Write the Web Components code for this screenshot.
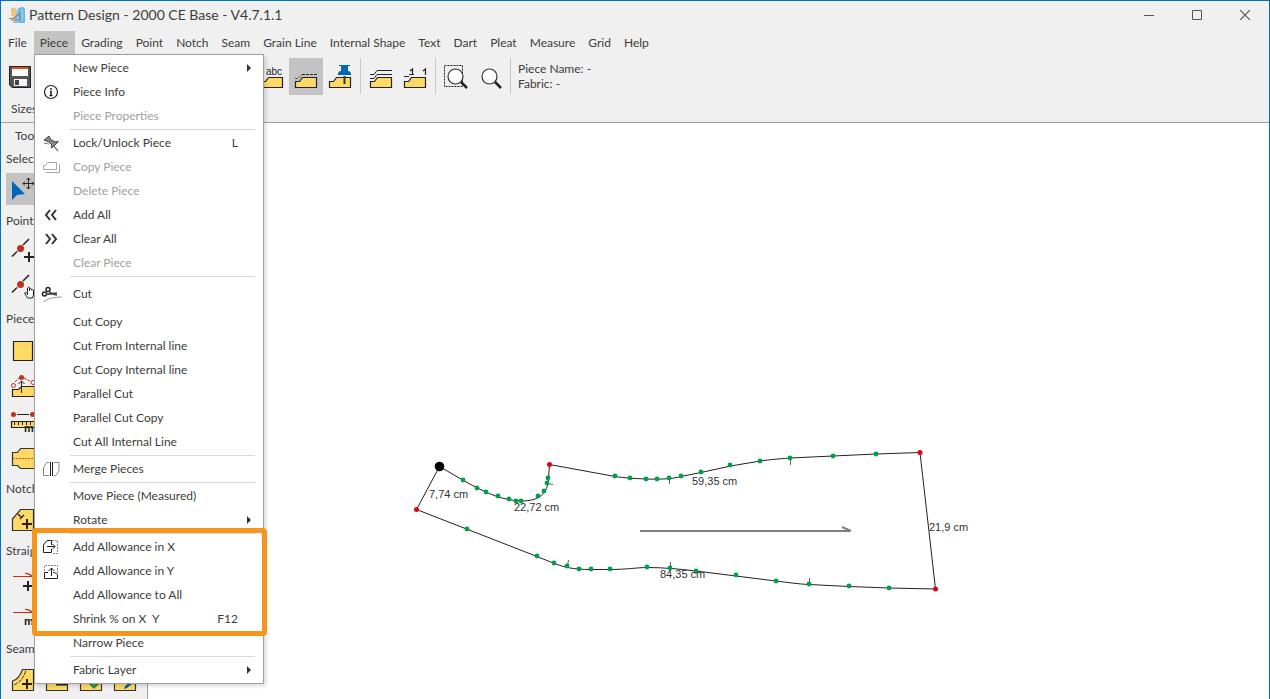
<!DOCTYPE html>
<html lang="en">
<head>
<meta charset="utf-8">
<title>Pattern Design - 2000 CE Base - V4.7.1.1</title>
<style>
  html, body { height: 100%; margin: 0; }
  body { font: 12px/16px Lato, "Open Sans", sans-serif; color: #3c3c3c; overflow: hidden; }
</style>
</head>
<body>
<pattern-app></pattern-app>

<script>
const TILE = 'M6.5 29.5V23.5H10.5L13.5 19.5H27.5V29.5Z';
const tile = `<path d="${TILE}" fill="#ffd966" stroke="#222" stroke-width="1.2"/>`;
const plus = (x, y) => `<path d="M${x - 5} ${y}h10M${x} ${y - 5}v10" stroke="#222" stroke-width="2" fill="none"/>`;
const lens = '<circle cx="16.5" cy="18.5" r="7.5" fill="#fff" stroke="#333" stroke-width="1.2"/><path d="M22 24l6 6" stroke="#222" stroke-width="2.5"/>';
const seamTile = '<path d="M6.5 28.5V19C11 18 14.5 13 16.5 7.5H27.5V28.5Z" fill="#ffd966" stroke="#333" stroke-width="1.2"/>';
const edgePoints = '<path d="M6 22.5l5-5M17 11l6-6" stroke="#222" stroke-width="1.5"/><circle cx="14.5" cy="14.5" r="3.5" fill="#c0311a"/>';
const grain = '<path d="M7 12.5h21M19 9.5q2-1 8 3" fill="none" stroke="#c0311a" stroke-width="1.2"/>';

/* name: [width, height, drawing] */
const ICONS = {
  app: [16, 16, '<path d="M8 2l5-2 3 2v14H4z" fill="#8cc4e8"/><path d="M11 1h4v14h-4z" fill="#8cccf0" stroke="#4f9fd0" stroke-width=".8"/><path d="M3 13L11 6v7z" fill="none" stroke="#7a8a94" stroke-width="1.2"/><path d="M2 2q3-3 5 0v6l-2 2v5H4v-5L2 8z" fill="#f1c27b"/><path d="M0 11.5h5" stroke="#888"/>'],
  minimize: [10, 10, '<path d="M0 5.5h10" stroke="#555"/>'],
  maximize: [10, 10, '<path d="M.5.5h9v9h-9z" fill="none" stroke="#555"/>'],
  close: [10, 10, '<path d="M0 0l10 10M10 0L0 10" stroke="#555" stroke-width="1.2"/>'],
  save: [34, 37, '<path d="M6 8h22v22H9l-3-3z" fill="#555"/><path d="M9 9h16v9H9z" fill="#fff"/><path d="M9 8h16v3H9z" fill="#d9541e"/><path d="M6.5 8.5h21v21H9.5l-3-3z" fill="none" stroke="#222"/><path d="M11 21h13v7H11z" fill="#f4f4f4"/><path d="M12 22h4v5h-4z" fill="#444"/>'],
  piece: [34, 37, tile],
  text: [34, 37, tile + '<text x="11" y="17" font-family="Liberation Sans" font-size="10" fill="#222">abc</text>'],
  seamline: [34, 37, tile + '<path d="M6 20.5h3l4-4" fill="none" stroke="#555" stroke-dasharray="3 1"/><path d="M13 16.5h15" stroke="#222" stroke-dasharray="3 1"/>'],
  pinned: [34, 37, tile + '<path d="M21.5 18v8" stroke="#333" stroke-width="2"/><path d="M16 7h11v1h-2v5h1l2 2v2H15v-2l2-2h1V8h-2z" fill="#0067b8"/>'],
  layers: [34, 37, tile + '<path d="M6 20.5h4l3-4h15M6 16.5h4l3-4h15" fill="none" stroke="#222"/>'],
  numbers: [34, 37, tile + '<path d="M6 18.5h5M11 16.5h5M12 13l2.5-2v6M25 13l2.5-2v6" fill="none" stroke="#222" stroke-width="1.2"/>'],
  zoomarea: [34, 37, '<path d="M5.5 7.5h18v21h-18z" fill="none" stroke="#222" stroke-dasharray="2 1"/>' + lens],
  zoom: [34, 37, lens],

  select: [34, 36, '<path d="M6 9v19l5-5 8-1z" fill="#0067b8"/><path d="M17 11.5h11M22.5 6v11M19 9.5l-2 2 2 2M26 9.5l2 2-2 2M20.5 8l2-2 2 2M20.5 15l2 2 2-2" fill="none" stroke="#222"/>'],
  pointadd: [34, 36, edgePoints + plus(23, 23)],
  pointmove: [34, 36, edgePoints + '<path d="M21.5 25v-7q1.5-2 2 0v3-2q1.5-1 2 0v1q1.5-1 2 0v5l-1 3h-5l-3-5q1-2 3 1" fill="#fff" stroke="#222"/>'],
  rect: [34, 36, '<path d="M7.5 9.5h19v19h-19z" fill="#ffd966" stroke="#222" stroke-width="1.2"/>'],
  reshape: [34, 36, '<path d="M6.5 28.5v-7h6l3-3h13v10z" fill="#ffd966" stroke="#222" stroke-width="1.2"/><path d="M9 14l4-4M18 10l6 3" stroke="#c0311a" stroke-dasharray="3 1"/><circle cx="7.5" cy="17.5" r="2" fill="#fff" stroke="#c0311a"/><circle cx="27" cy="14.5" r="2" fill="#fff" stroke="#c0311a"/><circle cx="15.5" cy="9.5" r="2.5" fill="#c0311a"/><path d="M15.5 25V13M12.5 16l3-3 3 3" fill="none" stroke="#222"/>'],
  ruler: [34, 36, '<circle cx="7.5" cy="10.5" r="2.5" fill="#c0311a"/><circle cx="26.5" cy="10.5" r="2.5" fill="#c0311a"/><path d="M11 10.5h12" stroke="#222"/><path d="M5.5 17.5h23v6h-23z" fill="#ffd966" stroke="#222" stroke-width="1.2"/><path d="M8.5 18v3M12.5 18v3M16.5 18v3M20.5 18v3M24.5 18v3" stroke="#222"/><text x="18" y="28" font-family="Liberation Sans" font-weight="700" font-size="11" fill="#222">m</text>'],
  mirror: [34, 36, '<path d="M6.5 12.5h5l3-4h14v20h-14l-3-3h-5z" fill="#ffd966" stroke="#333" stroke-width="1.2"/><path d="M7 18.5h21" stroke="#d9541e" stroke-dasharray="2 1"/>'],
  notch: [34, 36, '<path d="M6.5 28.5V17l8-9.5h13v21z" fill="#ffd966" stroke="#333" stroke-width="1.2"/><path d="M12 12l4 4M14 17l4-4" stroke="#222" stroke-width="1.2"/>' + plus(21, 22)],
  grainadd: [34, 36, grain + plus(22, 22)],
  grainmeasure: [34, 36, grain + '<text x="18" y="25" font-family="Liberation Sans" font-weight="700" font-size="11" fill="#222">m</text>'],
  seamadd: [34, 36, seamTile + '<path d="M8 23q9-4 12-15" fill="none" stroke="#333" stroke-dasharray="4 1"/>' + plus(21, 22)],
  seamremove: [34, 36, seamTile + '<path d="M16 22.5h11" stroke="#222" stroke-width="2"/>'],
  seamcheck: [34, 36, seamTile + '<path d="M16 21l4 4 4-4" fill="none" stroke="#23904a" stroke-width="3"/>'],
  seamedit: [34, 36, seamTile + '<path d="M16 27l1-3 5-4 2 2-5 4z" fill="#0067b8"/>'],

  info: [24, 24, '<circle cx="12" cy="12" r="6.5" fill="none" stroke="#222" stroke-width="1.2"/><path d="M12 8v2M11 11.5h1v4M10.5 15.5h3" fill="none" stroke="#222" stroke-width="1.5"/>'],
  pin: [24, 24, '<path d="M10 5l2 4 5 2 2-1v1l-6 6-1-1 1-2-3-3-5-2z" fill="#888" stroke="#444"/><path d="M5 12l5 1M14 14l5 6" stroke="#777" stroke-width="1.2"/>'],
  copy: [24, 24, '<path d="M4.5 14.5v-4h2l2-3h9v7zM7 17.5h13.5V9" fill="none" stroke="#a8a8a8"/>'],
  addall: [24, 24, '<path d="M11 7l-4 5 4 5M17 7l-4 5 4 5" fill="none" stroke="#333" stroke-width="2"/>'],
  clearall: [24, 24, '<path d="M7 7l4 5-4 5M13 7l4 5-4 5" fill="none" stroke="#333" stroke-width="2"/>'],
  cut: [24, 24, '<circle cx="9" cy="7.5" r="2" fill="none" stroke="#222" stroke-width="1.5"/><circle cx="5.5" cy="12" r="2" fill="none" stroke="#222" stroke-width="1.5"/><path d="M7 12l11-1M10 9l3 3 5 1" fill="none" stroke="#444" stroke-width="1.5"/><path d="M4 20q6-5 19-5" fill="none" stroke="#999"/>'],
  merge: [24, 24, '<path d="M10 5.5H7.5L4.5 11v7.5H10" fill="none" stroke="#888"/><path d="M11.5 5v14M13.5 5v14" stroke="#222"/><path d="M15 5.5h5V14l-3 4.5h-2" fill="none" stroke="#888"/>'],
  allowx: [24, 24, '<path d="M12.5 10V5.5H8L4.5 10v7.5h8V14" fill="none" stroke="#222"/><path d="M13 5.5h5.5v13H13" fill="none" stroke="#888" stroke-dasharray="2 1"/><path d="M8 11.5h8M13.5 9l2.5 2.5-2.5 2.5" fill="none" stroke="#222"/>'],
  allowy: [24, 24, '<path d="M5.5 12V6.5h13V14" fill="none" stroke="#888" stroke-dasharray="2 1"/><path d="M9 13.5H5.5v6h13v-4l-3-2H14" fill="none" stroke="#222"/><path d="M12.5 17V9M9.5 12l3-3 3 3" fill="none" stroke="#222"/>'],
  arrow: [4, 8, '<path d="M0 0l4 4-4 4z" fill="#333"/>']
};

function define(name, html, setup) {
  const template = document.createElement('template');
  template.innerHTML = html;
  customElements.define(name, class extends HTMLElement {
    connectedCallback() {
      if (this.shadowRoot) return;
      const root = this.attachShadow({ mode: 'open' });
      root.append(template.content.cloneNode(true));
      if (setup) setup(this, root);
    }
  });
}

define('ui-icon', '<style>:host{display:block;flex:none}svg{display:block}</style>', (el, root) => {
  const [w, h, art] = ICONS[el.getAttribute('name')];
  root.innerHTML += `<svg width="${w}" height="${h}" viewBox="0 0 ${w} ${h}" aria-hidden="true">${art}</svg>`;
});

define('tool-button', `
<style>
  :host { display: block; flex: none; }
  button { display: flex; align-items: center; justify-content: center; width: 100%; border: 0; padding: 0; background: none; }
  :host([active]) button { background: #c3c3c3; }
  :host([active="short"]) button { background: linear-gradient(#c3c3c3, #c3c3c3) 0 1px / 100% 32px no-repeat; }
  :host([window]) { width: 48px; }
  :host([window]) button { height: 28px; }
</style>
<button type="button"></button>`, (el, root) => {
  const name = el.getAttribute('icon');
  const button = root.querySelector('button');
  button.setAttribute('aria-label', name);
  button.innerHTML = `<ui-icon name="${name}"></ui-icon>`;
});

define('title-bar', `
<style>
  :host { display: flex; align-items: center; height: 28px; padding: 0 0 2px 8px; font-size: 14px; }
  h1 { flex: 1; margin: 0; padding-left: 4px; font: inherit; }
</style>
<ui-icon name="app"></ui-icon>
<h1><slot></slot></h1>
<tool-button window icon="minimize"></tool-button>
<tool-button window icon="maximize"></tool-button>
<tool-button window icon="close"></tool-button>`);

define('menu-bar', `
<style>
  :host { display: block; }
  nav { display: flex; padding-left: 1px; }
  button { border: 0; background: none; font: inherit; color: inherit; padding: 4px 7px 3px 6px; white-space: nowrap; }
  .open { background: #c3c3c3; }
</style>
<nav></nav>`, (el, root) => {
  const nav = root.querySelector('nav');
  for (const label of el.getAttribute('items').split('|')) {
    const b = document.createElement('button');
    b.type = 'button';
    b.textContent = label;
    if (label === el.getAttribute('open')) b.className = 'open';
    nav.append(b);
  }
});

define('tool-bar', `
<style>
  :host { display: block; border-bottom: 1px solid #a0a0a0; }
  .row { display: flex; align-items: center; padding: 3px 2px 0; }
  hr { width: 1px; height: 36px; margin: 0 3px; border: 0; background: #c8c8c8; }
  .info { align-self: flex-start; padding: 4px; line-height: 15px; }
  .info p { margin: 0; }
  .sizes { padding: 6px 10px 5px; }
</style>
<div class="row">
  <tool-button icon="save"></tool-button><tool-button icon="piece"></tool-button><tool-button icon="piece"></tool-button><hr>
  <tool-button icon="piece"></tool-button><tool-button icon="piece"></tool-button><tool-button icon="piece"></tool-button><hr>
  <tool-button icon="piece"></tool-button>
  <tool-button icon="text"></tool-button><tool-button icon="seamline" active></tool-button><tool-button icon="pinned"></tool-button><hr>
  <tool-button icon="layers"></tool-button><tool-button icon="numbers"></tool-button><hr>
  <tool-button icon="zoomarea"></tool-button><tool-button icon="zoom"></tool-button><hr>
  <div class="info"><p>Piece Name: -</p><p>Fabric: -</p></div>
</div>
<div class="sizes">Sizes</div>`);

define('tool-section', `
<style>
  :host { display: block; }
  h2 { margin: 0; padding: 5px 0; font: inherit; }
  div { display: grid; grid-template-columns: repeat(4, 34px); }
  :host([stack]) div { grid-template-columns: 34px; }
</style>
<h2></h2><div><slot></slot></div>`, (el, root) => {
  root.querySelector('h2').textContent = el.getAttribute('label');
});

define('tool-panel', `
<style>
  :host { display: block; flex: none; width: 147px; box-sizing: border-box; padding-left: 5px; border-right: 1px solid #a0a0a0; background: #f0f0f0; overflow: hidden; }
  .tab { padding: 5px 9px 2px; }
</style>
<div class="tab">Tools</div>
<tool-section stack label="Select"><tool-button active="short" icon="select"></tool-button></tool-section>
<tool-section stack label="Point"><tool-button icon="pointadd"></tool-button><tool-button icon="pointmove"></tool-button></tool-section>
<tool-section stack label="Piece"><tool-button icon="rect"></tool-button><tool-button icon="reshape"></tool-button><tool-button icon="ruler"></tool-button><tool-button icon="mirror"></tool-button></tool-section>
<tool-section stack label="Notch"><tool-button icon="notch"></tool-button></tool-section>
<tool-section stack label="Straight"><tool-button icon="grainadd"></tool-button><tool-button icon="grainmeasure"></tool-button></tool-section>
<tool-section label="Seam"><tool-button icon="seamadd"></tool-button><tool-button icon="seamremove"></tool-button><tool-button icon="seamcheck"></tool-button><tool-button icon="seamedit"></tool-button></tool-section>`);

define('design-canvas', `
<style>
  :host { display: block; flex: 1; min-width: 0; background: #fff; }
  svg { display: block; width: 100%; height: 100%; }
  text { font: 11px "Liberation Sans", sans-serif; fill: #333; }
</style>
<svg role="img" aria-label="Pattern piece">
  <g transform="translate(-148 -123)">
    <g fill="none" stroke="#222">
      <path d="M439.5 466.5L416.5 509.5L537 556.5L554.5 563.5C564 567 572 569.5 591 569.5H610C627 569.5 637 567.5 647.5 567.5C662 567.5 680 569 696 571L736 576L776 581C788 582.5 798 584 809 584.5L849 586.5L889 588L935.5 589L920 452.5L876 454L833 456L790 458C778 459 770 459.5 760.5 461L730.5 466L701 472.5L681 476.5C672 479 660 479.5 646 479C635 478.5 625 478 615 476.5L549.5 464.5L548.5 478C548 494 539 501 521 501C514 501 506 499 498 497C487 493 475 487 463.5 480.5Z"/>
      <path d="M547 483.5l6 1M669.5 478v6M790.5 459v6M567.5 566l1-6M670.5 568v-6M809.5 584v-6" stroke="#666"/>
    </g>
    <path d="M640 531h210M842 527l9 4" fill="none" stroke="#808080" stroke-width="2"/>
    <g id="points" fill="#00a04a"></g>
    <g fill="#e60012"><circle cx="416.5" cy="509.5" r="2.5"/><circle cx="549.5" cy="464.5" r="2.5"/><circle cx="920" cy="452.5" r="2.5"/><circle cx="935.5" cy="589" r="2.5"/></g>
    <circle cx="439.5" cy="466.5" r="4.8"/>
    <text x="429" y="498">7,74 cm</text>
    <text x="514" y="511">22,72 cm</text>
    <text x="692" y="485">59,35 cm</text>
    <text x="660" y="578">84,35 cm</text>
    <text x="929" y="531">21,9 cm</text>
  </g>
</svg>`, (el, root) => {
  const points = [[463, 480], [477, 488], [486, 492], [498, 496], [509, 499], [516, 501], [521, 501], [538, 496], [544, 491], [547, 483], [548, 478],
    [615, 476], [630, 478], [646, 479], [657, 479], [669, 478], [681, 476], [701, 472], [730, 465], [760, 461], [790, 458], [833, 456], [876, 454],
    [467, 529], [537, 556], [554, 563], [567, 566], [579, 569], [591, 569], [610, 569], [647, 567], [670, 568], [696, 571], [736, 575], [776, 581], [809, 584], [849, 586], [889, 588]];
  root.querySelector('#points').innerHTML = points.map(([x, y]) => `<circle cx="${x}" cy="${y}" r="2.4"/>`).join('');
});

define('menu-item', `
<style>
  :host { display: block; }
  button { display: flex; align-items: center; width: 100%; height: 24px; padding: 0 25px 0 4px; border: 0; background: none; font: inherit; color: inherit; text-align: left; }
  :host([tall]) button { height: 32px; }
  button:disabled { color: #a0a0a0; }
  .icon { width: 34px; }
  .label { flex: 1; white-space: pre; }
  :host([submenu]) button { padding-right: 12px; }
</style>
<button type="button" role="menuitem"><span class="icon"></span><span class="label"><slot></slot></span></button>`, (el, root) => {
  const button = root.querySelector('button');
  button.disabled = el.hasAttribute('disabled');
  if (el.hasAttribute('icon')) root.querySelector('.icon').innerHTML = `<ui-icon name="${el.getAttribute('icon')}"></ui-icon>`;
  if (el.hasAttribute('submenu')) button.insertAdjacentHTML('beforeend', '<ui-icon name="arrow"></ui-icon>');
  if (el.hasAttribute('key')) {
    const key = document.createElement('span');
    key.textContent = el.getAttribute('key');
    button.append(key);
  }
});

define('piece-menu', `
<style>
  :host { display: block; box-sizing: border-box; width: 230px; padding: 1px 0; border: 1px solid #a0a0a0; background: #fff; box-shadow: 2px 2px 4px rgba(0,0,0,.15); }
  hr { height: 1px; margin: 1px 8px 1px 35px; border: 0; background: #d7d7d7; }
  .group { position: relative; }
  .mark { position: absolute; inset: -7px -4px 19px -3px; border: 5px solid #f7941d; border-radius: 4px; pointer-events: none; }
</style>
<div role="menu">
  <menu-item submenu>New Piece</menu-item>
  <menu-item icon="info">Piece Info</menu-item>
  <menu-item disabled>Piece Properties</menu-item>
  <hr>
  <menu-item icon="pin" key="L">Lock/Unlock Piece</menu-item>
  <menu-item icon="copy" disabled>Copy Piece</menu-item>
  <menu-item disabled>Delete Piece</menu-item>
  <menu-item icon="addall">Add All</menu-item>
  <menu-item icon="clearall">Clear All</menu-item>
  <menu-item disabled>Clear Piece</menu-item>
  <hr>
  <menu-item icon="cut" tall>Cut</menu-item>
  <menu-item>Cut Copy</menu-item>
  <menu-item>Cut From Internal line</menu-item>
  <menu-item>Cut Copy Internal line</menu-item>
  <menu-item>Parallel Cut</menu-item>
  <menu-item>Parallel Cut Copy</menu-item>
  <menu-item>Cut All Internal Line</menu-item>
  <hr>
  <menu-item icon="merge">Merge Pieces</menu-item>
  <hr>
  <menu-item>Move Piece (Measured)</menu-item>
  <menu-item submenu>Rotate</menu-item>
  <hr>
  <div class="group">
    <menu-item icon="allowx">Add Allowance in X</menu-item>
    <menu-item icon="allowy">Add Allowance in Y</menu-item>
    <menu-item>Add Allowance to All</menu-item>
    <menu-item key="F12">Shrink % on X  Y</menu-item>
    <menu-item>Narrow Piece</menu-item>
    <div class="mark"></div>
  </div>
  <hr>
  <menu-item submenu>Fabric Layer</menu-item>
</div>`);

define('pattern-app', `
<style>
  :host { display: flex; flex-direction: column; position: relative; box-sizing: border-box; height: 100vh; border: 1px solid #0070c0; border-bottom: 0; background: #f0f0f0; overflow: hidden; }
  main { display: flex; flex: 1; min-height: 0; }
  piece-menu { position: absolute; left: 33px; top: 53px; }
</style>
<title-bar>Pattern Design - 2000 CE Base - V4.7.1.1</title-bar>
<menu-bar open="Piece" items="File|Piece|Grading|Point|Notch|Seam|Grain Line|Internal Shape|Text|Dart|Pleat|Measure|Grid|Help"></menu-bar>
<tool-bar></tool-bar>
<main>
  <tool-panel></tool-panel>
  <design-canvas></design-canvas>
</main>
<piece-menu></piece-menu>`);
</script>
</body>
</html>
